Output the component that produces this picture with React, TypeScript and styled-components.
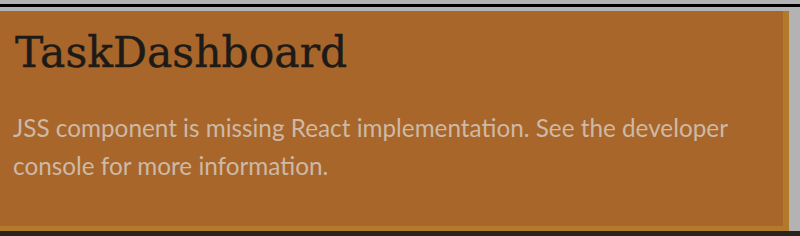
import styled, { createGlobalStyle } from "styled-components";

const GlobalStyle = createGlobalStyle`
    html, body {
        margin: 0;
        padding: 0;
        background-color: #b3b3b3;
        width: 800px;
        height: 236px;
        overflow: hidden;
    }
`

const Page = styled.div`
    width: 800px;
    height: 236px;
    display: flex;
    flex-direction: column;
`

const TopRule = styled.div`
    height: 3px;
    margin-top: 4px;
    background-color: #000;
    flex-shrink: 0;
`

const Frame = styled.div`
    margin-top: 4px;
    flex: 1;
    display: flex;
    flex-direction: column;
`

const Row = styled.div`
    flex: 1;
    display: flex;
`

const Panel = styled.section`
    width: 789px;
    box-sizing: border-box;
    background-color: #a8662a;
    border-right: 6px solid #b47a2c;
    border-bottom: 5px solid #b47a2c;
    padding: 14px 0 0 13px;
    display: flex;
    flex-direction: column;
`

const Title = styled.h1`
    margin: 0 0 0 2px;
    font-family: "DejaVu Serif", serif;
    font-weight: normal;
    font-size: 42.5px;
    line-height: 56px;
    color: #1e1a17;
    -webkit-text-stroke: 0.4px #1e1a17;
`

const Message = styled.p`
    margin: 28px 0 0 0;
    font-family: Lato, sans-serif;
    font-size: 24.3px;
    line-height: 38px;
    color: #cdb9a6;
    max-width: 745px;
`

const BottomRule = styled.div`
    height: 5px;
    background-color: #2a241f;
    flex-shrink: 0;
`

export default function App() {
    return (
        <Page>
            <GlobalStyle />
            <TopRule />
            <Frame>
                <Row>
                    <Panel>
                        <Title>TaskDashboard</Title>
                        <Message>
                            JSS component is missing React implementation. See the developer console for more information.
                        </Message>
                    </Panel>
                </Row>
                <BottomRule />
            </Frame>
        </Page>
    );
}
